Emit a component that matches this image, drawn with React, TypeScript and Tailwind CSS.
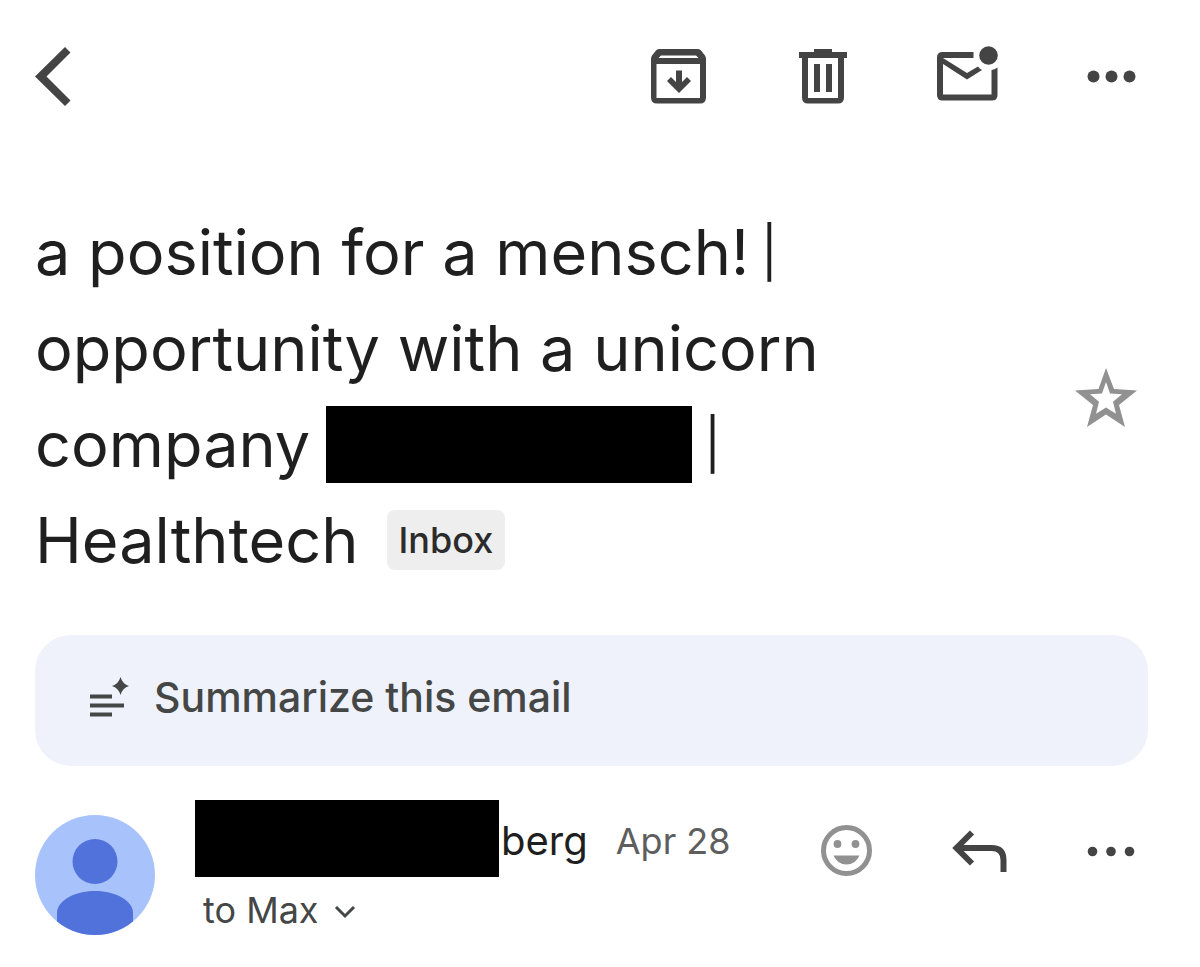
import type { ReactNode } from 'react'

function IconButton({ label, className, children }: { label: string; className: string; children: ReactNode }) {
  return (
    <button type="button" aria-label={label} className={`shrink-0 ${className}`}>
      {children}
    </button>
  )
}

function Toolbar() {
  return (
    <header className="flex items-center justify-between text-[#444444]">
      <IconButton label="Back" className="w-9">
        <svg viewBox="0 0 36 72" className="block h-[72px] w-9" fill="currentColor">
          <path d="M0 36.500 30 7l5.500 5.500-24 24 24 24L30 66z" />
        </svg>
      </IconButton>
      <div className="flex items-center gap-[72px]">
        <IconButton label="Archive" className="w-[72px]">
          <svg viewBox="0 0 72 72" className="block size-[72px]" fill="currentColor" fillRule="evenodd">
            <path d="M15 9h39q2 0 3 1.500l4 5q1 1.500 1 3.500v38.500q0 6-6 6H13q-6 0-6-6V19q0-2 1-3.500l4-5Q13 9 15 9zM17 15.500l-2.500 2.500h40L52 15.500zM12.500 24v34H56V24z" />
            <path d="M32 30.500h6V42l5-5 4 4-12 12-12-12 4-4 5 5z" />
          </svg>
        </IconButton>
        <IconButton label="Delete" className="w-[72px]">
          <svg viewBox="0 0 72 72" className="block size-[72px]" fill="currentColor" fillRule="evenodd">
            <path d="M26 9h18v3h15v6h-3v39.500q0 6-6 6H20q-6 0-6-6V18h-3v-6h15zM20 18v40h30V18z" />
            <path d="M26 24h6v28h-6zM38 24h6v28h-6z" />
          </svg>
        </IconButton>
        <IconButton label="Mark as unread" className="w-[72px]">
          <svg viewBox="0 0 72 72" className="block size-[72px]" fill="currentColor">
            <path d="M41.500 12H10.500Q5 12 5 17.500V55q0 5.500 5.500 5.500H60q5.500 0 5.500-5.500V27.500q-3 2-6 2.500v24.500H11V24l24 15.500L50 30q-2.500-1.500-4-3.500L35 33 11 18h30.500z" />
            <circle cx="56.500" cy="15.500" r="9.300" />
          </svg>
        </IconButton>
        <IconButton label="More options" className="w-[72px]">
          <svg viewBox="0 0 72 72" className="block size-[72px]" fill="currentColor">
            <circle cx="17.500" cy="36.500" r="6" />
            <circle cx="35.500" cy="36.500" r="6" />
            <circle cx="53.500" cy="36.500" r="6" />
          </svg>
        </IconButton>
      </div>
    </header>
  )
}

function Subject() {
  return (
    <section className="mt-[92px] flex items-center justify-between">
      <h1 className="text-[63px] leading-[96px] text-[#1f1f1f]">
        <span className="flex items-center">
          a position for a mensch!
          <span className="ml-3 text-[50px]">|</span>
        </span>
        <span className="block">opportunity with a unicorn</span>
        <span className="flex items-center">
          company
          <span className="mr-3 ml-4 h-[77px] w-[366px] bg-black" />
          <span className="text-[50px]">|</span>
        </span>
        <span className="flex items-center">
          Healthtech
          <span className="ml-7 rounded-lg bg-[#eeeeee] px-3 text-[36px] leading-[60px] font-medium text-[#2b2b2b]">
            Inbox
          </span>
        </span>
      </h1>
      <IconButton label="Star" className="w-[84px] text-[#919191]">
        <svg viewBox="0 0 84 84" className="block size-[84px]" fill="currentColor" fillRule="evenodd">
          <path d="M42 14l8 21 23 1.500L55 51l6 22-19-12.500L23 73l6-22L11 36.500 34.500 35zM42 28 38 39.500l-12 .800 9 7.500-3 12L42 53.500l10 6.300-3-12 9-7.500-12-.800z" />
        </svg>
      </IconButton>
    </section>
  )
}

function SummarizeCard() {
  return (
    <button
      type="button"
      className="mt-[47px] flex h-[131px] w-full items-center rounded-[36px] bg-[#eff2fb] pb-1.5 pl-[53px] text-left text-[41px] font-medium text-[#444746]"
    >
      <svg viewBox="0 0 44 44" className="mr-[22px] size-11 shrink-0" fill="currentColor">
        <path d="M2 18.500h22v4H2zM2 27.500h34v4H2zM2 36.500h22v4H2z" />
        <path d="M32.500 1q2 7 8.500 9-6.500 2-8.500 9-2-7-8.500-9 6.500-2 8.500-9z" />
      </svg>
      Summarize this email
    </button>
  )
}

function Avatar() {
  return (
    <svg viewBox="0 0 120 120" className="mt-[15px] size-[120px] shrink-0 rounded-full bg-[#a8c2fb]" fill="#5072da">
      <circle cx="60" cy="46.500" r="22.500" />
      <path d="M22 98c0-12 17-22 38-22s38 10 38 22v22H22z" />
    </svg>
  )
}

function Sender() {
  return (
    <section className="mt-[34px] flex items-start">
      <Avatar />
      <div className="ml-10">
        <div className="flex h-[77px] items-center">
          <span className="h-[77px] w-[304px] bg-black" />
          <span className="pt-1 pl-0.5 text-[40px] text-[#1f1f1f]">berg</span>
          <time className="ml-7 pt-1 text-[36px] text-[#5e5e5e]">Apr 28</time>
        </div>
        <button type="button" className="ml-2 flex items-center text-[36px] leading-[66px] text-[#444746]">
          to Max
          <svg viewBox="0 0 24 24" className="mt-1 ml-3.5 size-6" fill="none" stroke="currentColor" strokeWidth="3">
            <path d="M3 7l9 9 9-9" />
          </svg>
        </button>
      </div>
      <div className="mt-[15px] ml-auto flex items-center gap-[60px]">
        <IconButton label="Add reaction" className="w-[72px] text-[#919191]">
          <svg viewBox="0 0 72 72" className="block size-[72px]" fill="currentColor">
            <circle cx="34.500" cy="35.500" r="23" fill="none" stroke="currentColor" strokeWidth="5" />
            <circle cx="25.500" cy="29" r="3.900" />
            <circle cx="43.500" cy="29" r="3.900" />
            <path d="M21.500 40.500h26q-4 9-13 9t-13-9z" />
          </svg>
        </IconButton>
        <IconButton label="Reply" className="w-[72px] text-[#444444]">
          <svg viewBox="0 0 72 72" className="block size-[72px]" fill="none" stroke="currentColor" strokeWidth="6">
            <path d="M28 17.500 12.500 33 28 48.500M12.500 33h35Q59.500 33 59.500 45v12" />
          </svg>
        </IconButton>
        <IconButton label="More message options" className="w-[72px] text-[#444444]">
          <svg viewBox="0 0 72 72" className="block size-[72px]" fill="currentColor">
            <circle cx="16.500" cy="36.500" r="4.800" />
            <circle cx="35" cy="36.500" r="4.800" />
            <circle cx="53.500" cy="36.500" r="4.800" />
          </svg>
        </IconButton>
      </div>
    </section>
  )
}

export default function App() {
  return (
    <main className="min-h-screen bg-white pt-10 pr-[52px] pb-8 pl-[35px] font-['Inter',sans-serif]">
      <Toolbar />
      <Subject />
      <SummarizeCard />
      <Sender />
    </main>
  )
}
